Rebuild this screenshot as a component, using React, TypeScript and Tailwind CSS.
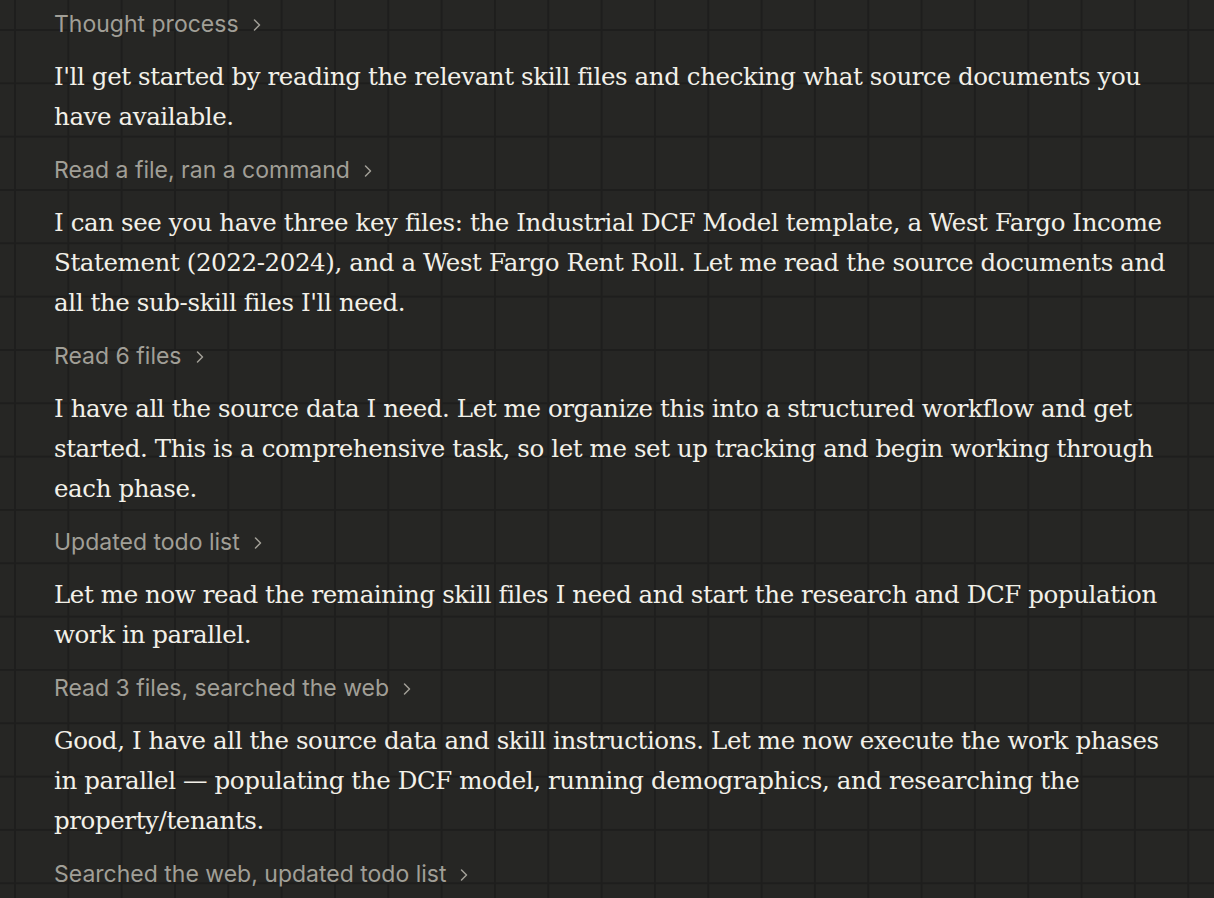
import React from "react";

type Step =
  | { kind: "label"; text: string }
  | { kind: "text"; text: string };

const steps: Step[] = [
  { kind: "label", text: "Thought process" },
  {
    kind: "text",
    text: "I'll get started by reading the relevant skill files and checking what source documents you have available.",
  },
  { kind: "label", text: "Read a file, ran a command" },
  {
    kind: "text",
    text: "I can see you have three key files: the Industrial DCF Model template, a West Fargo Income Statement (2022-2024), and a West Fargo Rent Roll. Let me read the source documents and all the sub-skill files I'll need.",
  },
  { kind: "label", text: "Read 6 files" },
  {
    kind: "text",
    text: "I have all the source data I need. Let me organize this into a structured workflow and get started. This is a comprehensive task, so let me set up tracking and begin working through each phase.",
  },
  { kind: "label", text: "Updated todo list" },
  {
    kind: "text",
    text: "Let me now read the remaining skill files I need and start the research and DCF population work in parallel.",
  },
  { kind: "label", text: "Read 3 files, searched the web" },
  {
    kind: "text",
    text: "Good, I have all the source data and skill instructions. Let me now execute the work phases in parallel \u2014 populating the DCF model, running demographics, and researching the property/tenants.",
  },
  { kind: "label", text: "Searched the web, updated todo list" },
];

const Chevron = () => (
  <svg width="10" height="14" viewBox="0 0 10 14" fill="none" className="ml-[13px] mt-[2px]">
    <path d="M2.5 2 L7.5 7 L2.5 12" stroke="currentColor" strokeWidth="1.5" strokeLinecap="round" strokeLinejoin="round" />
  </svg>
);

const StepLabel = ({ text }: { text: string }) => (
  <button className="flex h-[32px] items-center self-start text-[23px] text-[#a19f97] font-['Inter',sans-serif]">
    <span>{text}</span>
    <Chevron />
  </button>
);

export default function App() {
  return (
    <div className="h-[898px] w-full overflow-hidden bg-[#262624] bg-[linear-gradient(to_right,#1e1e1d_2px,transparent_2px),linear-gradient(to_bottom,#1e1e1d_2px,transparent_2px)] bg-[size:53.333px_53.333px] bg-[position:14px_29px]">
      <div className="flex w-[1124px] flex-col gap-[17px] pl-[54px] pt-[8px] box-content">
        {steps.map((s, i) =>
          s.kind === "label" ? (
            <StepLabel key={i} text={s.text} />
          ) : (
            <p
              key={i}
              className="text-[24.5px] leading-[40px] tracking-[-0.4px] text-[#f2f0e8] font-['DejaVu_Serif',serif]"
            >
              {s.text}
            </p>
          )
        )}
      </div>
    </div>
  );
}
